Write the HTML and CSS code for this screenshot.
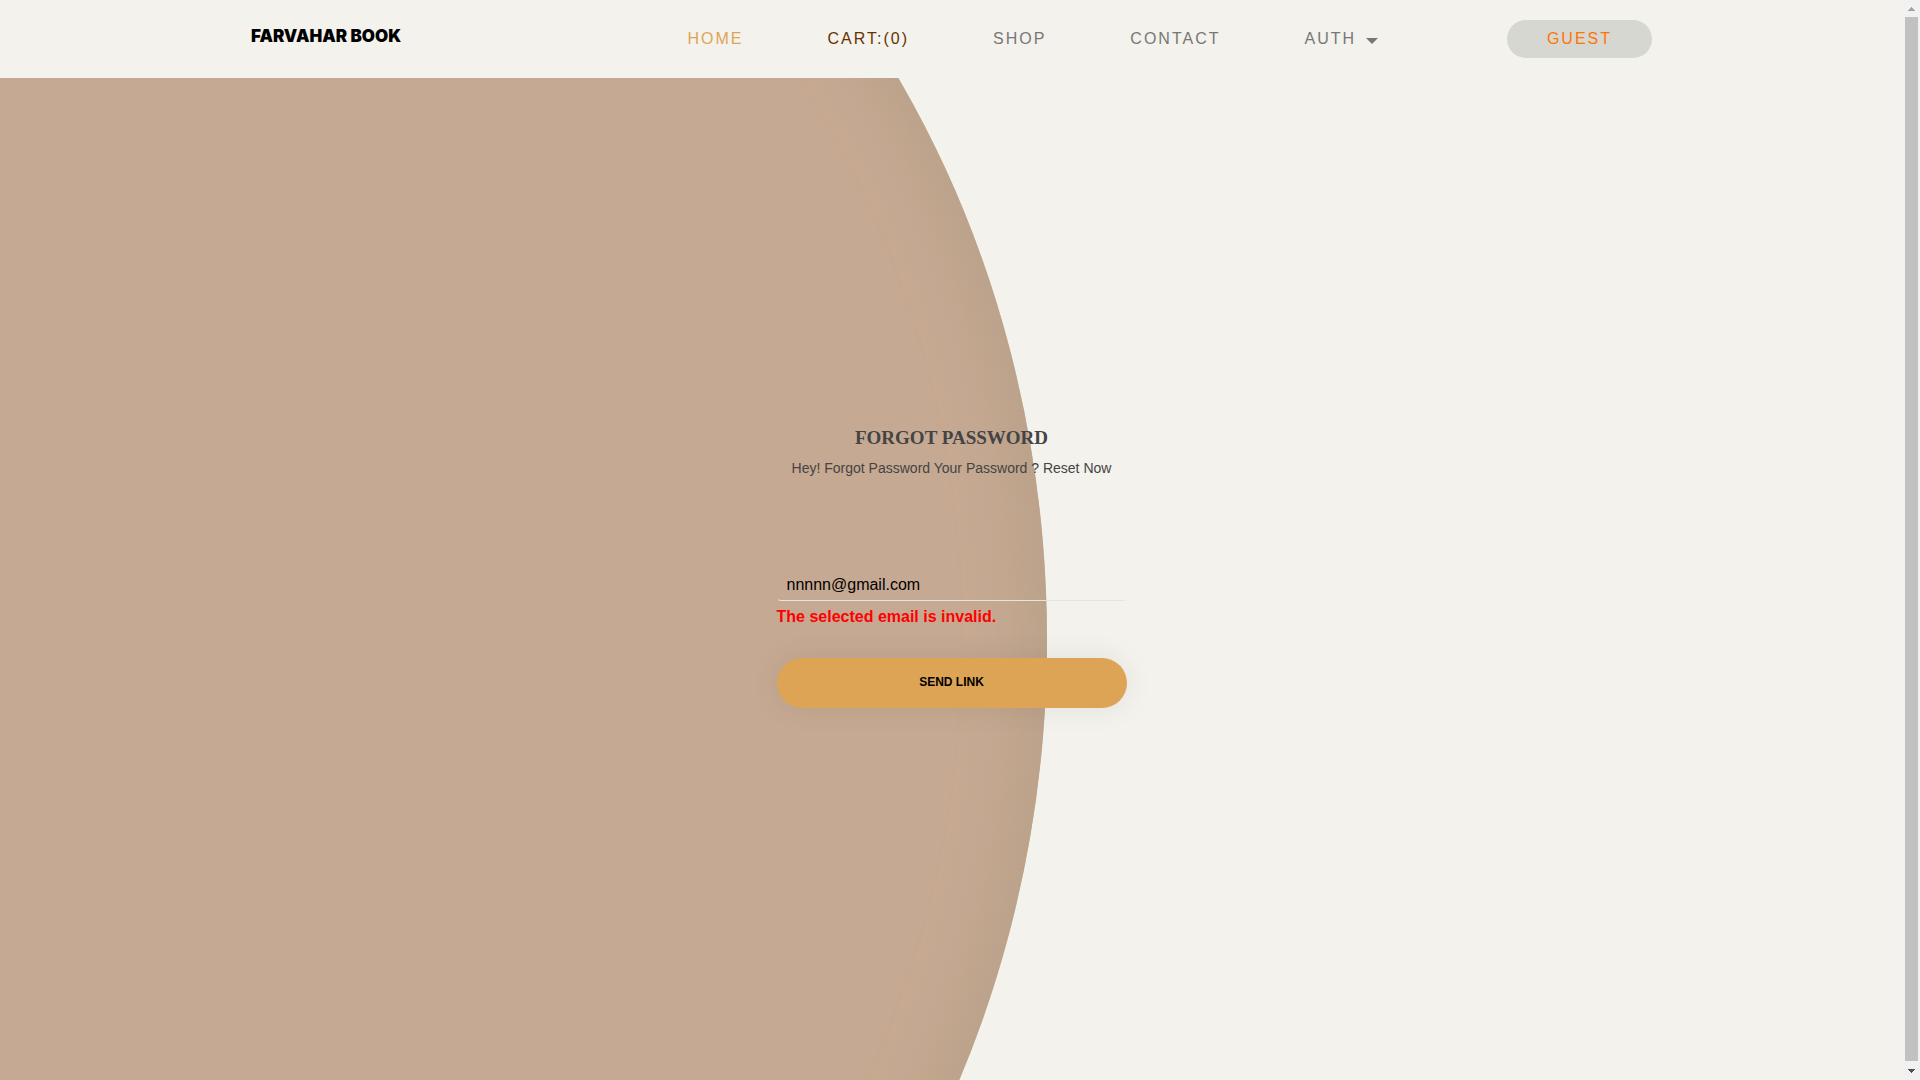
FILE: index.html
```html
<!DOCTYPE html>
<html lang="en">
<head>
<meta charset="utf-8">
<meta name="viewport" content="width=device-width, initial-scale=1">
<title>Farvahar Book</title>
<link rel="stylesheet" href="styles.css">
</head>
<body>
<div class="page">
  <header class="header">
    <a class="logo" href="#">FARVAHAR BOOK</a>
    <nav class="nav">
      <a class="nav-link active" href="#">HOME</a>
      <a class="nav-link cart" href="#">CART:(0)</a>
      <a class="nav-link" href="#">SHOP</a>
      <a class="nav-link" href="#">CONTACT</a>
      <a class="nav-link auth" href="#">AUTH
        <svg class="caret" viewBox="0 0 12 6" aria-hidden="true"><path d="M0 0h12L6 6z"/></svg></a>
    </nav>
    <button class="guest" type="button">GUEST</button>
  </header>
  <main class="main">
    <form class="form">
      <h1 class="title">FORGOT PASSWORD</h1>
      <p class="intro">Hey! Forgot Password Your Password ? Reset Now</p>
      <input class="email" type="email" aria-label="Email" aria-describedby="email-error" value="nnnnn@gmail.com">
      <p class="error" id="email-error">The selected email is invalid.</p>
      <button class="send" type="button">SEND LINK</button>
    </form>
  </main>
</div>
<div class="scrollbar" aria-hidden="true">
  <svg class="scroll-arrow up" viewBox="0 0 7 4"><path d="M3 0h1v1h1v1h1v1h1v1H0V3h1V2h1V1h1z"/></svg>
  <div class="thumb"></div>
  <svg class="scroll-arrow down" viewBox="0 0 7 4"><path d="M0 0h7v1H6v1H5v1H4v1H3V3H2V2H1V1H0z"/></svg>
</div>
</body>
</html>
```
FILE: styles.css
```css
* {
  box-sizing: border-box;
}

body {
  margin: 0;
  display: flex;
  min-height: 100vh;
  background: #f3f2ec;
  font-family: "Liberation Sans", Arial, sans-serif;
  color: #000;
}

.page {
  flex: 1;
  min-width: 0;
  display: flex;
  flex-direction: column;
}

.header {
  display: flex;
  align-items: flex-start;
  height: 78px;
  padding: 20px 251px;
}

.logo {
  width: 154px;
  font: 900 17px/33px Inter, sans-serif;
  color: #000;
  text-decoration: none;
  white-space: nowrap;
}

.nav {
  display: flex;
  gap: 84px;
  margin: 0 auto;
  padding-left: 154px;
}

.nav-link {
  font-size: 16px;
  line-height: 37px;
  letter-spacing: 2px;
  color: #777;
  text-decoration: none;
  white-space: nowrap;
}

.active {
  color: #dea456;
}

.cart {
  color: #663300;
}

.caret {
  width: 12px;
  height: 6px;
  margin-left: 4px;
  fill: #777;
}

.guest {
  width: 145px;
  height: 38px;
  padding: 0;
  border: 0;
  border-radius: 20px;
  background: #d6d7d0;
  font: 16px "Liberation Sans", Arial, sans-serif;
  letter-spacing: 2px;
  color: #ff7404;
}

.main {
  position: relative;
  flex: 1;
  display: flex;
  justify-content: center;
  align-items: flex-start;
  padding: 346px 16px 0;
  overflow: hidden;
}

/* Large tan ellipse behind the form */
.main::before {
  content: "";
  position: absolute;
  top: 52vh;
  left: 55%;
  width: 1720px;
  height: 2000px;
  border-radius: 50%;
  background: #c6a992;
  box-shadow: inset -16px 0 64px #b8a088;
  transform: translate(-100%, -50%);
}

.form {
  position: relative;
  width: 350px;
  display: flex;
  flex-direction: column;
}

.title {
  margin: 0;
  font: bold 19px/28px "Liberation Serif", serif;
  text-align: center;
  color: #444;
}

.intro {
  margin: 4px 0 84px;
  font-size: 14px;
  line-height: 24px;
  text-align: center;
  color: #444;
}

.email {
  width: 100%;
  height: 37px;
  padding: 8px 9px 4px;
  border: 1px solid transparent;
  border-bottom-color: #e4e4e2;
  border-radius: 4px;
  background: transparent;
  font: 16px "Liberation Sans", Arial, sans-serif;
  color: #000;
}

.error {
  margin: 4px 0 29px;
  font-size: 16px;
  font-weight: bold;
  line-height: 24px;
  color: #f00;
}

.send {
  height: 50px;
  padding: 0 0 2px;
  border: 0;
  border-radius: 25px;
  background: #dea456;
  box-shadow: 0 0 30px rgba(0, 0, 0, 0.08);
  font: bold 12px "Liberation Sans", Arial, sans-serif;
  color: #000;
}

.scrollbar {
  position: sticky;
  top: 0;
  width: 17px;
  height: 100vh;
  display: flex;
  flex-direction: column;
  align-items: center;
  gap: 6px;
  padding: 7px 0;
  background: #f1f1f1;
}

.thumb {
  flex: 1;
  width: 13px;
  margin-bottom: 2px;
  background: #c1c1c1;
}

.scroll-arrow {
  width: 7px;
  height: 4px;
}

.up {
  fill: #a3a3a3;
}

.down {
  fill: #505050;
}
```
